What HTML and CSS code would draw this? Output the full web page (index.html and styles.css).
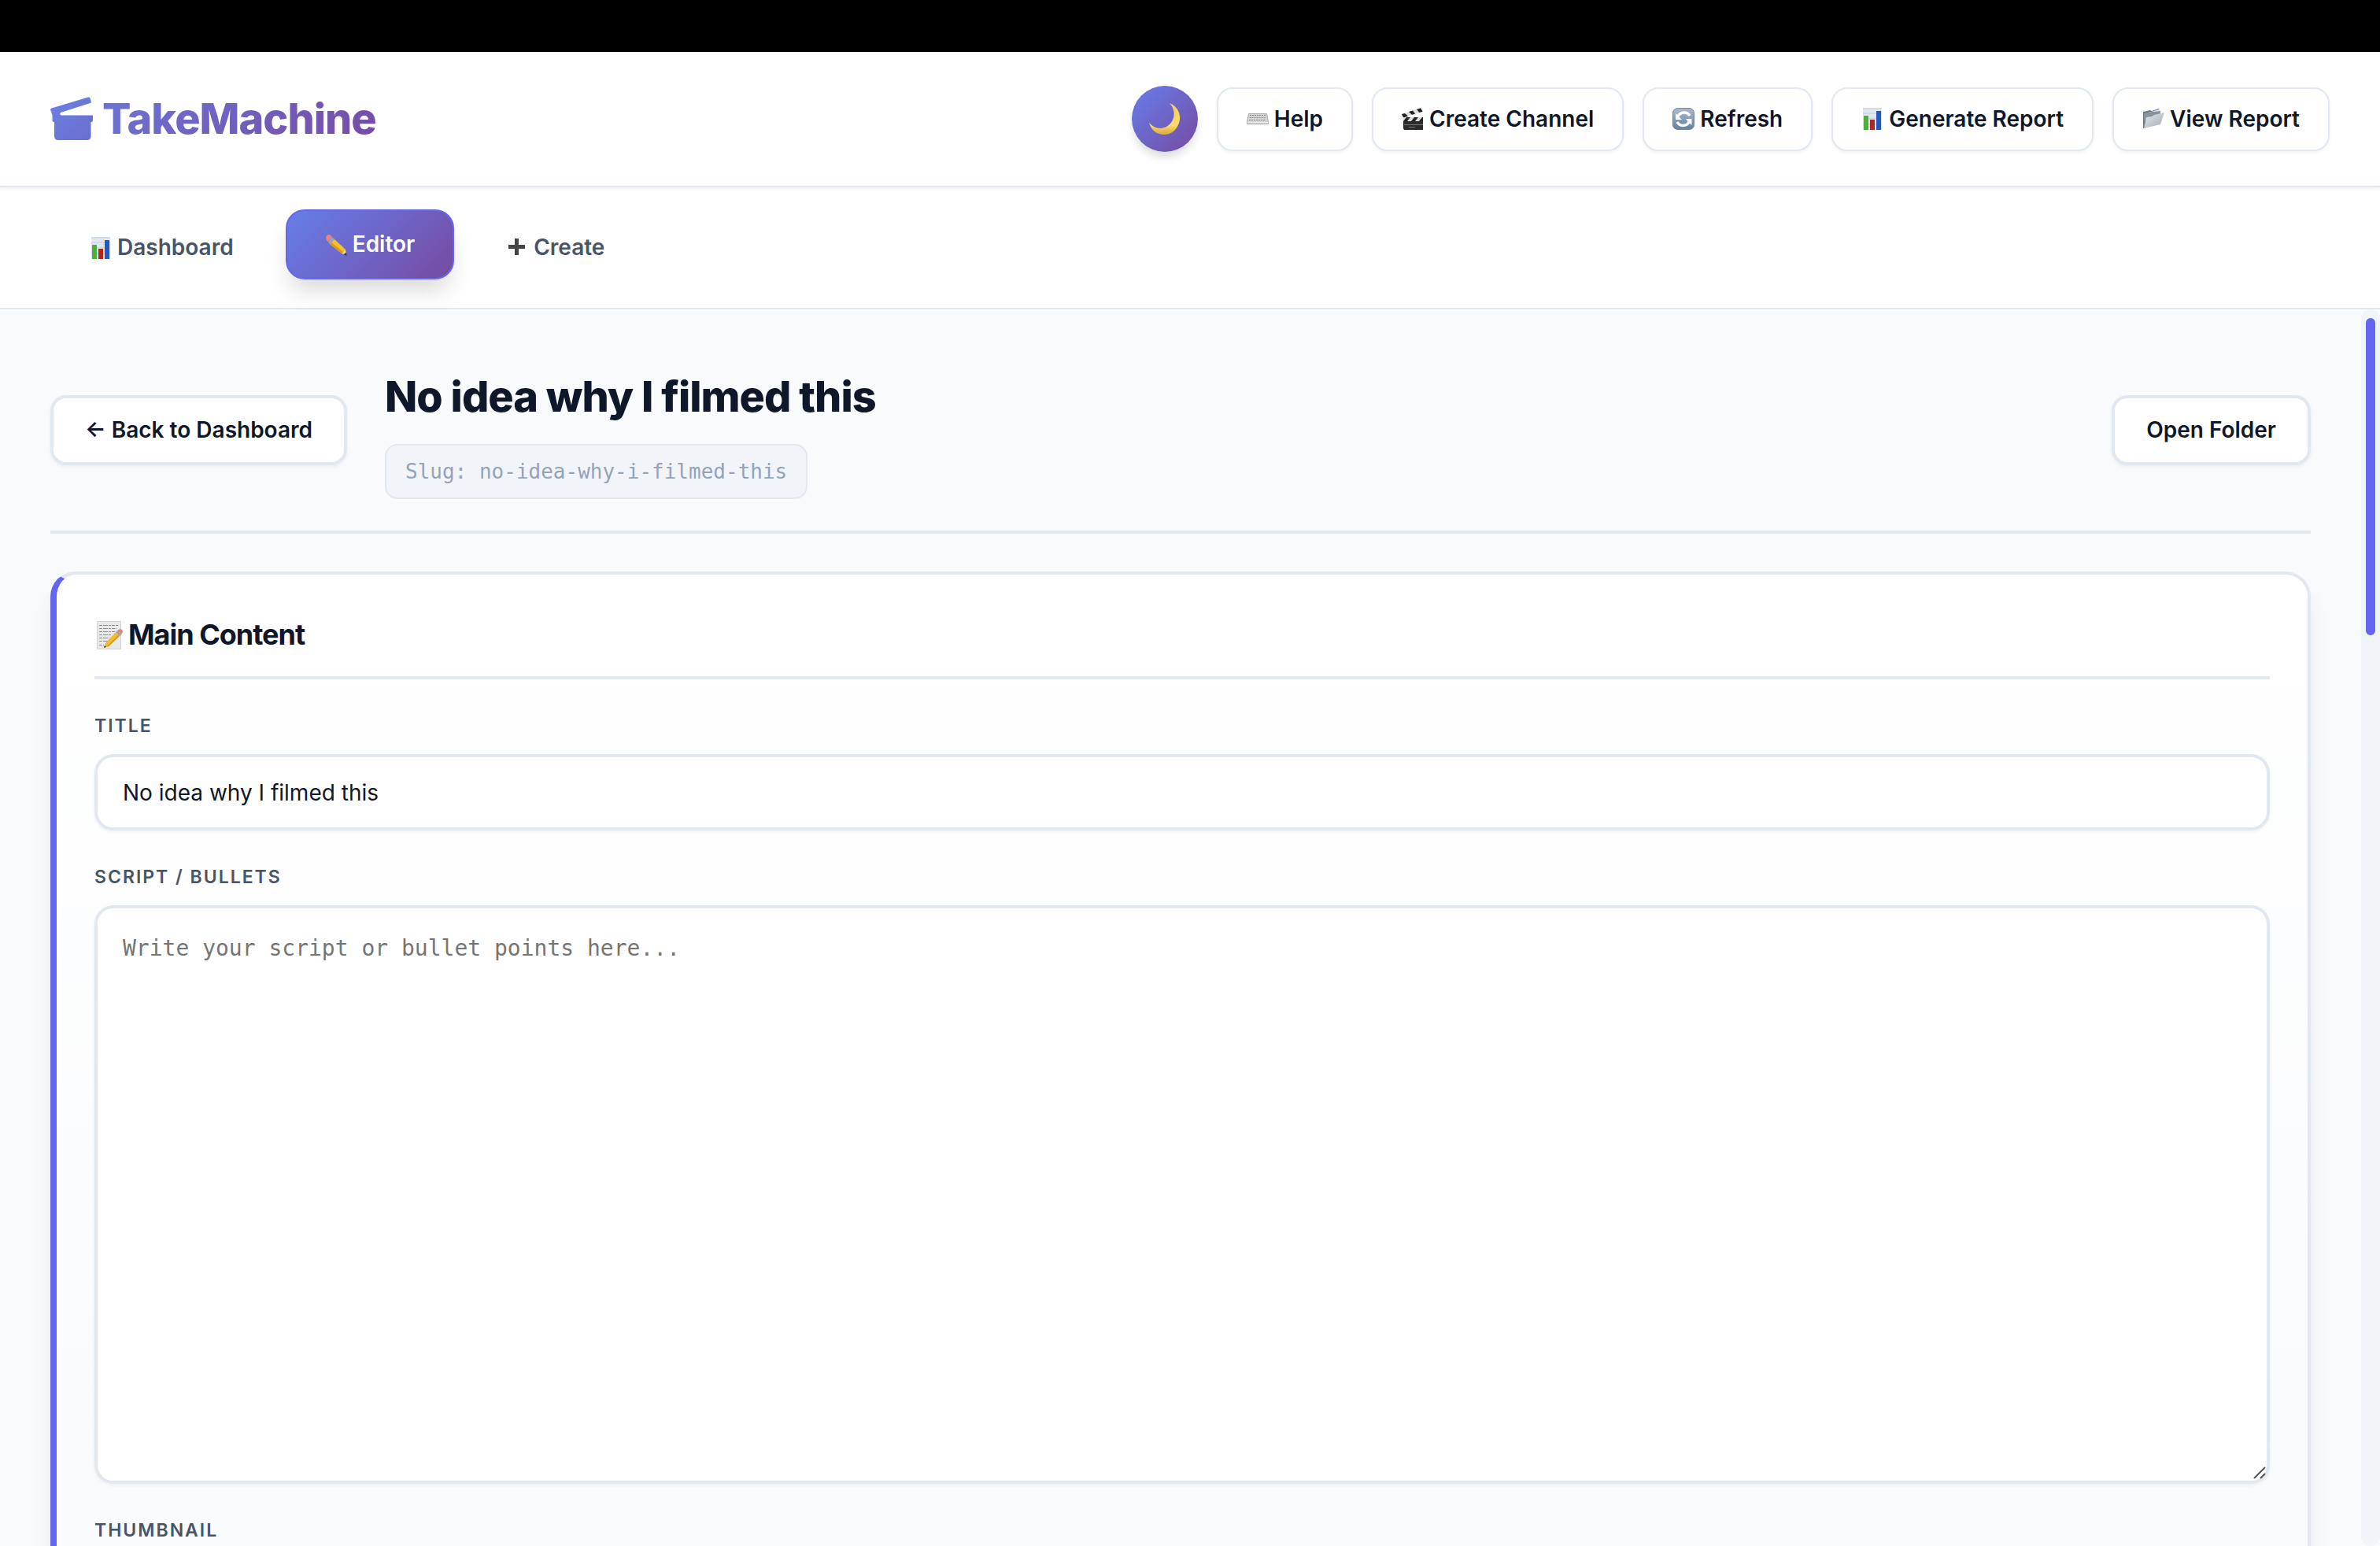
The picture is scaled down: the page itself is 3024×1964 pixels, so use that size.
FILE: index.html
```html
<!DOCTYPE html>
<html lang="en">
<head>
<meta charset="utf-8">
<title>TakeMachine</title>
<link rel="stylesheet" href="styles.css">
</head>
<body>
<svg class="defs" aria-hidden="true">
  <defs>
    <linearGradient id="brand" x1="0" y1="0" x2="1" y2="1"><stop offset="0" stop-color="#6a80e6"/><stop offset="1" stop-color="#6b6ecc"/></linearGradient>
    <linearGradient id="moon" x1="0" y1="0" x2="0" y2="1"><stop offset="0" stop-color="#f3cf55"/><stop offset=".7" stop-color="#fbdc6a"/><stop offset="1" stop-color="#dba63a"/></linearGradient>
    <linearGradient id="steel" x1="0" y1="0" x2="0" y2="1"><stop offset="0" stop-color="#a9bccf"/><stop offset="1" stop-color="#64809f"/></linearGradient>
    <linearGradient id="folder" x1="0" y1="0" x2="1" y2="1"><stop offset="0" stop-color="#e4e7ea"/><stop offset="1" stop-color="#a3abb3"/></linearGradient>
    <symbol id="chart" viewBox="0 0 28 28">
      <path fill="#dfe8f1" d="M2 0h24v28H2z"/><path stroke="#c3cedb" d="M2 1h24M2 7h24M2 14h24M2 21h24"/>
      <path fill="#4caf3a" d="M3 10h6v18H3z"/><path fill="#b3261e" d="M11 15h6v13h-6z"/><path fill="#2459c4" d="M19 4h6v24h-6z"/>
    </symbol>
  </defs>
</svg>
<div class="titlebar"></div>
<header class="header">
  <div class="logo">
    <svg class="logo-icon" viewBox="0 0 56 56" aria-hidden="true"><path fill="url(#brand)" d="M0 16.500Q0 15 1.500 14.500L48 .500Q50 0 50.500 1.500L52 7.500L13 20Q11.500 21 12.500 22.500L14 23.500H54V30Q54 32 52 32H51.500V50Q51.500 55 46.500 55H10Q5 55 5 50V32H4.500Q2.500 32 2.500 30V23Z"/></svg>
    <span class="logo-text">TakeMachine</span>
  </div>
  <div class="actions">
    <button class="theme" type="button" aria-label="Toggle theme">
      <svg viewBox="0 0 40 40" aria-hidden="true"><path fill="url(#moon)" d="M26 0C36 4 40 13 39 21C37 33 29 40 19 40C10 40 3 35 0 25C8 34 20 34 27 26C34 18 33 8 26 0Z"/></svg>
    </button>
    <button class="btn" type="button"><svg class="icon" viewBox="0 0 28 28" aria-hidden="true"><path fill="#d4d4d4" stroke="#aaa" d="M2.500 7.500h23l2 10v3H.500v-3z"/><path stroke="#8c8c8c" stroke-dasharray="2 1" d="M4 9.500h20M3.500 12.500h21M3 15.500h22"/><path stroke="#eee" d="M1 18.500h26"/></svg>Help</button>
    <button class="btn" type="button"><svg class="icon" viewBox="0 0 28 28" aria-hidden="true"><path fill="#2c2c2c" d="M2 12h25v16H3l-1-2z"/><path fill="#ddd" d="M2 12h25v5H2z"/><path fill="#222" d="M2 17l4-5h5l-4 5zM12 17l4-5h5l-4 5zM22 17l4-5h1v5z"/><path fill="#ddd" d="M0 8L25 0l2 5L3 12z"/><path fill="#222" d="M0 8l4-1 4 3.500-4 1.500H2zM9 5l5-1.500 3 4-4 1.300zM19 2l5-1.700 2.500 4.500-4 1.300z"/><path stroke="#777" d="M3 21.500h24M9 24.500h8"/></svg>Create Channel</button>
    <button class="btn" type="button"><svg class="icon" viewBox="0 0 28 28" aria-hidden="true"><rect x=".5" y=".5" width="27" height="27" rx="6" fill="url(#steel)" stroke="#6f87a1"/><path fill="none" stroke="#fff" stroke-width="3.500" d="M7 11a8.500 8.500 0 0 1 15-1M21 18a8.500 8.500 0 0 1-15 0"/><path fill="#fff" d="M4 7v8h8zM24.500 22v-8h-8z"/></svg>Refresh</button>
    <button class="btn" type="button"><svg class="icon" aria-hidden="true"><use href="#chart"/></svg>Generate Report</button>
    <button class="btn" type="button"><svg class="icon" viewBox="0 0 28 28" aria-hidden="true"><path fill="#6d7a86" d="M1 5l9-2 2 1 9-3 2 4v10L3 26H1z"/><path fill="#f2f2f2" d="M4 7l18-5v4L5 11z"/><path fill="#8593a0" d="M2 7l10-2 11-1v6L2 16z"/><path fill="url(#folder)" d="M5 12l7-1 3-2 13-3-5 15L2 26z"/></svg>View Report</button>
  </div>
</header>
<nav class="tabs">
  <button class="tab" type="button"><svg class="icon" aria-hidden="true"><use href="#chart"/></svg>Dashboard</button>
  <button class="tab tab-active" type="button"><svg class="icon" viewBox="0 0 28 28" aria-hidden="true"><path fill="#e8837d" d="M1 5Q1 1 6 1L9 4L4 10Q1 8 1 5Z"/><path fill="#9aa5b0" d="M9 4l3 3-6 6-2-3z"/><path fill="#f5c02c" d="M12 7l14 13-5 5L6 13z"/><path fill="#d9971c" d="M8 11l15 12-2 2L6 13z"/><path fill="#f0d3a0" d="M26 20l1 7-6-2z"/><path fill="#333" d="M27.500 28l-4-2 3.500-2z"/></svg>Editor</button>
  <button class="tab" type="button"><svg class="icon" viewBox="0 0 28 28" aria-hidden="true"><path fill="#444" d="M11 2h5v8h8v5h-8v8h-5v-8H3v-5h8z"/></svg>Create</button>
</nav>
<div class="viewport">
  <main class="content">
    <div class="page-head">
      <button class="btn btn-large" type="button">← Back to Dashboard</button>
      <div class="page-title">
        <h1>No idea why I filmed this</h1>
        <div class="slug">Slug: no-idea-why-i-filmed-this</div>
      </div>
      <button class="btn btn-large" type="button">Open Folder</button>
    </div>
    <section class="card">
      <h2><svg class="icon-large" viewBox="0 0 36 36" aria-hidden="true"><path fill="#e9e9e9" stroke="#d4d4d4" d="M3.500.500h30v35h-30z"/><path fill="none" stroke="#8d8d8d" stroke-dasharray="4 1 6 1 3 1" d="M6 5.500h24M6 9.500h22M6 13.500h20M6 17.500h16M6 21.500h13M6 25.500h11M6 30.500h6"/><path fill="#f3bd32" d="M27 14l5 5-14 13-6 2 2-6z"/><path fill="#d7962a" d="M30.500 17.500l1.500 1.500-14 13-3 1z"/><path fill="#9aa5b0" d="M29 12l5 5-2 2-5-5z"/><path fill="#e8837d" d="M29 12q3-3 6-1 2 3-1 6z"/><path fill="#333" d="M12 34l1-3 2 2z"/></svg>Main Content</h2>
      <div class="field">
        <label for="title">TITLE</label>
        <input id="title" type="text" value="No idea why I filmed this">
      </div>
      <div class="field">
        <label for="script">SCRIPT / BULLETS</label>
        <div class="editor">
          <textarea id="script" placeholder="Write your script or bullet points here..."></textarea>
          <svg class="grip" viewBox="0 0 16 16" aria-hidden="true"><path stroke="#555" stroke-width="2" d="M1 15L15 1M9 15l6-6"/></svg>
        </div>
      </div>
      <div class="field">
        <label for="thumbnail">THUMBNAIL</label>
        <input id="thumbnail" type="text">
      </div>
    </section>
  </main>
  <div class="scroll-track"><div class="scroll-thumb"></div></div>
</div>
</body>
</html>
```
FILE: styles.css
```css
* { box-sizing: border-box; }

body {
  margin: 0;
  height: 100vh;
  display: flex;
  flex-direction: column;
  overflow: hidden;
  background: #f8fafc;
  color: #0f172a;
  font-family: Inter, "Liberation Sans", sans-serif;
  font-size: 28px;
}

button, input, textarea { font: inherit; color: inherit; }

.defs { position: absolute; width: 0; height: 0; }

.titlebar { flex: none; height: 66px; background: #000; }

.header {
  flex: none;
  display: flex;
  align-items: center;
  justify-content: space-between;
  padding: 43px 64px;
  background: #fff;
  border-bottom: 2px solid #e2e8f0;
  box-shadow: 0 2px 6px rgba(0, 0, 0, 0.05);
  z-index: 1;
}

.logo { display: flex; align-items: center; gap: 10px; }
.logo-icon { width: 56px; height: 56px; }
.logo-text {
  font-size: 54px;
  font-weight: 800;
  line-height: 68px;
  letter-spacing: -1px;
  color: transparent;
  background: linear-gradient(135deg, #6a74d8, #764ba2);
  background-clip: text;
}

.actions { display: flex; align-items: center; gap: 24px; }

.theme {
  display: flex;
  align-items: center;
  justify-content: center;
  width: 84px;
  height: 84px;
  padding: 0;
  border: 0;
  border-radius: 50%;
  background: linear-gradient(135deg, #667eea, #764ba2);
  box-shadow: 0 8px 12px -2px rgba(0, 0, 0, 0.15);
}
.theme svg { width: 40px; height: 40px; }

.btn {
  display: flex;
  align-items: center;
  gap: 7px;
  padding: 22px 36px;
  line-height: 33px;
  font-weight: 600;
  white-space: nowrap;
  background: #fff;
  border: 2px solid #e2e8f0;
  border-radius: 20px;
  box-shadow: 0 2px 4px rgba(0, 0, 0, 0.05);
}
.btn-large { padding: 24px 40px; border-width: 4px; }

.icon { flex: none; width: 28px; height: 28px; }
.icon-large { flex: none; width: 36px; height: 36px; }

.tabs {
  flex: none;
  display: flex;
  gap: 16px;
  padding: 32px 64px;
  background: #fff;
  border-bottom: 2px solid #e2e8f0;
}
.tab {
  display: flex;
  align-items: center;
  gap: 7px;
  padding: 26px 48px;
  line-height: 33px;
  font-weight: 600;
  color: #475569;
  background: none;
  border: 2px solid transparent;
  border-radius: 24px;
}
.tab-active {
  color: #fff;
  background: linear-gradient(135deg, #667eea, #764ba2);
  border-color: #6366f1;
  box-shadow: 0 20px 30px -6px rgba(0, 0, 0, 0.15);
  transform: translateY(-4px);
}

.viewport { flex: 1; min-height: 0; display: flex; }

.content {
  flex: 1;
  min-width: 0;
  overflow: hidden;
  padding: 66px 64px;
}

.page-head {
  display: flex;
  align-items: center;
  gap: 48px;
  padding-bottom: 40px;
  margin-bottom: 48px;
  border-bottom: 4px solid #e2e8f0;
}
.page-title { flex: 1; display: flex; flex-direction: column; align-items: flex-start; gap: 16px; }
h1 { margin: 0; font-size: 54px; line-height: 89px; font-weight: 800; letter-spacing: -1px; }
.slug {
  padding: 12px 24px;
  font-family: "DejaVu Sans Mono", monospace;
  font-size: 26px;
  line-height: 42px;
  color: #94a3b8;
  background: #f1f5f9;
  border: 2px solid #e2e8f0;
  border-radius: 16px;
}

.card {
  display: flex;
  flex-direction: column;
  gap: 40px;
  padding: 48px;
  background: linear-gradient(180deg, #fff, #f8fafc 1400px);
  border: 4px solid #e2e8f0;
  border-left: 8px solid #6366f1;
  border-radius: 32px;
  box-shadow: 0 20px 30px -6px rgba(0, 0, 0, 0.1);
}
h2 {
  display: flex;
  align-items: center;
  gap: 7px;
  margin: 0;
  padding-bottom: 24px;
  font-size: 36px;
  line-height: 57px;
  font-weight: 700;
  letter-spacing: -1px;
  border-bottom: 4px solid #e2e8f0;
}

.field { display: flex; flex-direction: column; gap: 16px; }
label {
  font-size: 23px;
  line-height: 39px;
  font-weight: 600;
  letter-spacing: 2px;
  color: #475569;
}
input, textarea {
  display: block;
  width: 100%;
  padding: 28px 32px;
  background: #fff;
  border: 4px solid #e2e8f0;
  border-radius: 24px;
  box-shadow: 0 2px 4px rgba(0, 0, 0, 0.05);
}
input { line-height: 33px; height: 97px; }
textarea {
  height: 735px;
  font-family: "DejaVu Sans Mono", monospace;
  line-height: 45px;
  resize: none;
}
textarea::placeholder { color: #757575; }

.editor { position: relative; }
.grip { position: absolute; right: 5px; bottom: 6px; width: 16px; height: 16px; }

.scroll-track { flex: none; width: 24px; padding: 11px 6px; background: #f1f5f9; border-radius: 12px; }
.scroll-thumb { height: 26%; background: #6366f1; border-radius: 6px; }
```
